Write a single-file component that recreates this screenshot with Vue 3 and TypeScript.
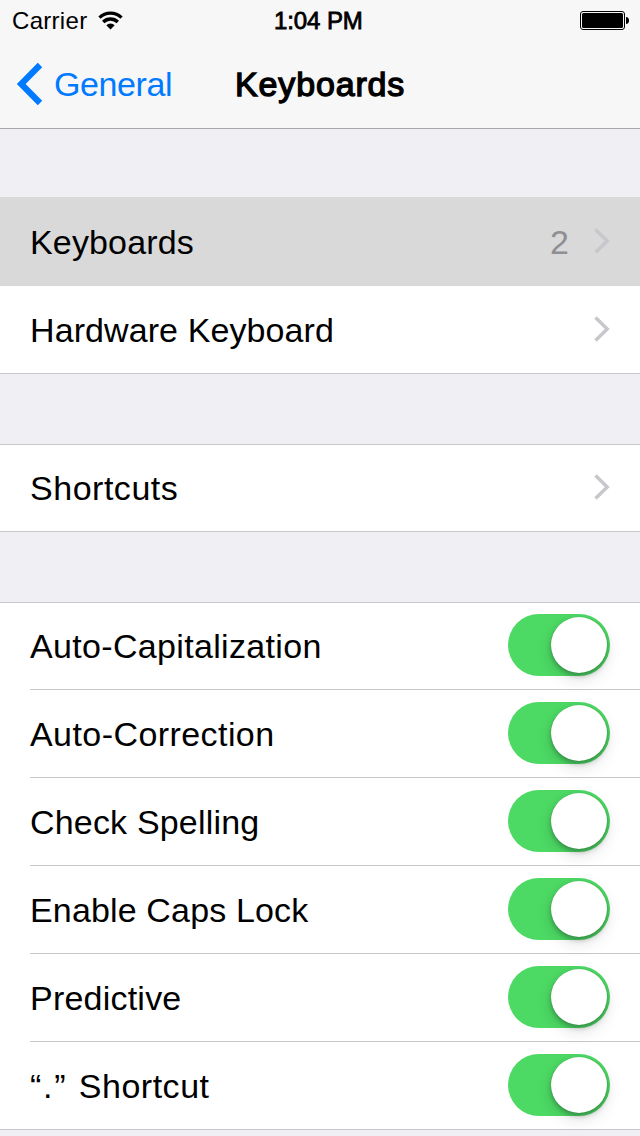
<script setup lang="ts">
interface Row {
  label: string
  tracking: number
  lead?: string
  value?: string
  kind: 'link' | 'toggle'
  selected?: boolean
}

const groups: Row[][] = [
  [
    { label: 'Keyboards', tracking: 0.15, value: '2', kind: 'link', selected: true },
    { label: 'Hardware Keyboard', tracking: 0.09, kind: 'link' },
  ],
  [{ label: 'Shortcuts', tracking: 0.52, kind: 'link' }],
  [
    { label: 'Auto-Capitalization', tracking: 0.33, kind: 'toggle' },
    { label: 'Auto-Correction', tracking: 0.43, kind: 'toggle' },
    { label: 'Check Spelling', tracking: 0.18, kind: 'toggle' },
    { label: 'Enable Caps Lock', tracking: 0.15, kind: 'toggle' },
    { label: 'Predictive', tracking: 0.22, kind: 'toggle' },
    { lead: '“.” ', label: 'Shortcut', tracking: 0.52, kind: 'toggle' },
  ],
]
</script>

<template>
  <div class="screen">
    <header class="header">
      <div class="status">
        <div class="carrier">
          <span class="carrier-name">Carrier</span>
          <svg class="wifi" width="25" height="19" viewBox="0 0 25 19">
            <g fill="none" stroke="#000" stroke-width="3.4">
              <path d="M1.500 6.600A15.800 15.800 0 0 1 23.500 6.600" />
              <path d="M5.200 11A10.400 10.400 0 0 1 19.800 11" />
            </g>
            <path d="M8.300 14.200A6.200 6.200 0 0 1 16.700 14.200L12.500 18.500Z" />
          </svg>
        </div>
        <span class="time">1:04 PM</span>
        <svg class="battery" width="50" height="20" viewBox="0 0 50 20">
          <rect x="0.5" y="0.5" width="44" height="18" rx="2.5" fill="none" stroke="#000" />
          <rect x="2" y="2" width="41" height="15" rx="1.5" />
          <path d="M46 6C48 6 49 7.500 49 9.500C49 11.500 48 13 46 13Z" />
        </svg>
      </div>
      <div class="nav">
        <div class="back">
          <svg class="back-icon" width="27" height="44" viewBox="0 0 27 44">
            <path d="M24 3L5.200 22L24 41" fill="none" stroke="#007aff" stroke-width="6.2" />
          </svg>
          <span class="back-label">General</span>
        </div>
        <h1 class="title">Keyboards</h1>
      </div>
    </header>

    <main class="list">
      <section v-for="(group, g) in groups" :key="g" class="group">
        <div v-for="row in group" :key="row.label" class="row" :class="{ selected: row.selected }">
          <div class="inner">
            <span class="label" :style="{ letterSpacing: row.tracking + 'px' }"><span v-if="row.lead" class="lead">{{ row.lead }}</span>{{ row.label }}</span>
            <span v-if="row.value" class="value">{{ row.value }}</span>
            <svg v-if="row.kind === 'link'" class="chevron" width="16" height="26" viewBox="0 0 16 26">
              <path d="M1.500 1.500L13.200 13L1.500 24.500" fill="none" stroke="#c7c7cc" stroke-width="3.500" />
            </svg>
            <span v-else class="toggle"><span class="thumb"></span></span>
          </div>
        </div>
      </section>
    </main>
  </div>
</template>

<style>
body {
  margin: 0;
  background: #efeff4;
}
</style>

<style scoped>
.screen {
  width: 640px;
  height: 1136px;
  overflow: hidden;
  background: #efeff4;
  color: #000;
  font-family: "Liberation Sans", Arial, sans-serif;
}
.header {
  box-sizing: border-box;
  height: 129px;
  background: #f7f7f7;
  border-bottom: 1px solid #a7a7ab;
}
.status {
  display: grid;
  grid-template-columns: 274px 1fr 60px;
  height: 40px;
  font-size: 24px;
  line-height: 41px;
}
.carrier {
  display: flex;
  padding-left: 12px;
}
.carrier-name {
  width: 86px;
  letter-spacing: 0.3px;
}
.wifi {
  margin-top: 11px;
}
.time {
  letter-spacing: -0.1px;
  -webkit-text-stroke: 0.8px #000;
}
.battery {
  margin-top: 11px;
}
.nav {
  display: grid;
  grid-template-columns: 235px 1fr;
  height: 88px;
  font-size: 34px;
  line-height: 88px;
}
.back {
  display: flex;
  padding-left: 16px;
  color: #007aff;
}
.back-icon {
  margin: 22px 11px 0 0;
}
.back-label {
  letter-spacing: -0.42px;
}
.title {
  margin: 0;
  font-size: 34px;
  font-weight: 400;
  letter-spacing: 0.85px;
  -webkit-text-stroke: 1.3px #000;
}
.list {
  display: flex;
  flex-direction: column;
  gap: 70px;
  padding-top: 68px;
}
.group {
  background: #fff;
  box-shadow: inset 0 1px #c8c7cc, inset 0 -1px #c8c7cc;
}
.row {
  padding-left: 30px;
}
.row.selected {
  padding-top: 1px;
  background: #d9d9d9;
}
.inner {
  display: flex;
  height: 88px;
  padding-right: 30px;
  font-size: 34px;
  line-height: 88px;
}
.row:not(:last-child):not(.selected) .inner {
  box-shadow: inset 0 -1px #c8c7cc;
}
.label {
  flex: 1;
  white-space: pre;
}
.lead {
  letter-spacing: 1.8px;
}
.value {
  margin-right: 25px;
  color: #8e8e93;
}
.chevron {
  margin-top: 30px;
}
.toggle {
  box-sizing: border-box;
  display: flex;
  justify-content: flex-end;
  width: 102px;
  height: 62px;
  margin-top: 12px;
  padding: 3px;
  border-radius: 31px;
  background: #4cd964;
}
.thumb {
  width: 56px;
  height: 56px;
  border-radius: 50%;
  background: #fff;
  box-shadow: 0 6px 16px rgba(0, 0, 0, 0.13), 0 3px 5px rgba(0, 0, 0, 0.26), 0 0 1px rgba(0, 0, 0, 0.2);
}
</style>
